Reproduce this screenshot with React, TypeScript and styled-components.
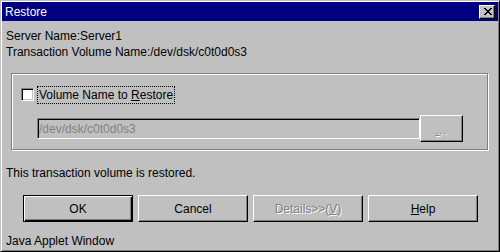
import React from 'react';
import styled, { createGlobalStyle, css } from 'styled-components';

const GlobalStyle = createGlobalStyle`
  html, body {
    margin: 0;
    padding: 0;
    background: #c0c0c0;
  }
  * {
    box-sizing: border-box;
  }
`;

const face = '#c0c0c0';
const shadow = '#808080';

const disabledText = css`
  color: ${shadow};
  text-shadow: 1px 1px 0 #fff;
`;

const WindowFrame = styled.div`
  width: 500px;
  height: 252px;
  display: flex;
  flex-direction: column;
  background: ${face};
  border: 1px solid;
  border-color: ${face} #000 #000 ${face};
  box-shadow: inset 1px 1px 0 #fff, inset -1px -1px 0 ${shadow};
  padding: 1px;
  font-family: 'Liberation Sans', Arial, sans-serif;
  font-size: 12px;
  line-height: 16px;
  color: #000;
`;

const TitleBar = styled.div`
  height: 19px;
  display: flex;
  align-items: flex-start;
  justify-content: space-between;
  background: #000080;
  color: #fff;
  padding: 0 3px 0 3px;
`;

const TitleText = styled.span`
  margin-top: 2px;
`;

const CloseButton = styled.div`
  width: 16px;
  height: 14px;
  margin-top: 3px;
  display: flex;
  align-items: center;
  justify-content: center;
  background: ${face};
  border: 1px solid;
  border-color: #fff #000 #000 #fff;
  box-shadow: inset -1px -1px 0 ${shadow};
  padding: 0 0 1px 2px;
`;

const Body = styled.div`
  flex: 1;
  display: flex;
  flex-direction: column;
  padding: 7px 4px 0 4px;
`;

const InfoLine = styled.div`
  height: 16px;
  white-space: nowrap;
`;

const GroupBox = styled.div`
  width: 477px;
  height: 77px;
  margin: 13px 0 0 5px;
  border: 1px solid ${shadow};
  box-shadow: 1px 1px 0 #fff, inset 1px 1px 0 #fff;
  padding: 12px 24px 7px 9px;
  display: flex;
  flex-direction: column;
`;

const CheckRow = styled.div`
  display: flex;
  align-items: flex-start;
  height: 18px;
`;

const CheckBox = styled.div`
  width: 13px;
  height: 13px;
  margin-top: 2px;
  background: #fff;
  border: 1px solid;
  border-color: ${shadow} #fff #fff ${shadow};
  box-shadow: inset 1px 1px 0 #000, inset -1px -1px 0 ${face};
`;

const FocusLabel = styled.label`
  margin-left: 3px;
  padding: 0 1px;
  height: 18px;
  border: 1px dotted #000;
  white-space: nowrap;
`;

const FieldRow = styled.div`
  display: flex;
  align-items: center;
  margin: 11px 0 0 16px;
  height: 27px;
`;

const TextField = styled.div`
  flex: 1;
  height: 21px;
  display: flex;
  align-items: center;
  background: ${face};
  border: 1px solid;
  border-color: ${shadow} #fff #fff ${shadow};
  box-shadow: inset 1px 1px 0 #000, inset -1px -1px 0 ${face};
  padding-left: 1px;
  color: ${shadow};
`;

const Bevel = styled.button<{ $default?: boolean; $disabled?: boolean }>`
  font: inherit;
  line-height: 16px;
  padding: 0;
  margin: 0;
  background: ${face};
  color: #000;
  display: flex;
  align-items: center;
  justify-content: center;
  border: 1px solid;
  border-color: #fff #000 #000 #fff;
  box-shadow: inset -1px -1px 0 ${shadow};
  ${({ $default }) =>
    $default &&
    css`
      border-color: #000;
      box-shadow: inset 1px 1px 0 #fff, inset -1px -1px 0 #000, inset -2px -2px 0 ${shadow};
    `}
  ${({ $disabled }) => $disabled && disabledText}
`;

const BrowseButton = styled(Bevel)`
  width: 43px;
  height: 27px;
  font-size: 11px;
  letter-spacing: 1px;
  padding-top: 2px;
`;

const Message = styled.div`
  height: 16px;
  margin-top: 15px;
`;

const ButtonRow = styled.div`
  display: flex;
  gap: 5px;
  margin: 14px 0 0 17px;
`;

const DialogButton = styled(Bevel)`
  width: 110px;
  height: 27px;
`;

const StatusLine = styled.div`
  height: 16px;
  margin-top: 11px;
`;

export default function App() {
  return (
    <>
      <GlobalStyle />
      <WindowFrame>
        <TitleBar>
          <TitleText>Restore</TitleText>
          <CloseButton>
            <svg width="8" height="7" viewBox="0 0 8 7" shapeRendering="crispEdges">
              <path
                d="M0 0h2v1H0zM6 0h2v1H6zM1 1h2v1H1zM5 1h2v1H5zM2 2h4v1H2zM3 3h2v1H3zM2 4h4v1H2zM1 5h2v1H1zM5 5h2v1H5zM0 6h2v1H0zM6 6h2v1H6z"
                fill="#000"
              />
            </svg>
          </CloseButton>
        </TitleBar>
        <Body>
          <InfoLine>Server Name:Server1</InfoLine>
          <InfoLine>Transaction Volume Name:/dev/dsk/c0t0d0s3</InfoLine>
          <GroupBox>
            <CheckRow>
              <CheckBox />
              <FocusLabel>
                Volume Name to <u>R</u>estore
              </FocusLabel>
            </CheckRow>
            <FieldRow>
              <TextField>/dev/dsk/c0t0d0s3</TextField>
              <BrowseButton $disabled>
                <span>
                  <u>.</u>..
                </span>
              </BrowseButton>
            </FieldRow>
          </GroupBox>
          <Message>This transaction volume is restored.</Message>
          <ButtonRow>
            <DialogButton $default>OK</DialogButton>
            <DialogButton>Cancel</DialogButton>
            <DialogButton $disabled>
              Details&gt;&gt;(<u>V</u>)
            </DialogButton>
            <DialogButton>
              <u>H</u>elp
            </DialogButton>
          </ButtonRow>
          <StatusLine>Java Applet Window</StatusLine>
        </Body>
      </WindowFrame>
    </>
  );
}
